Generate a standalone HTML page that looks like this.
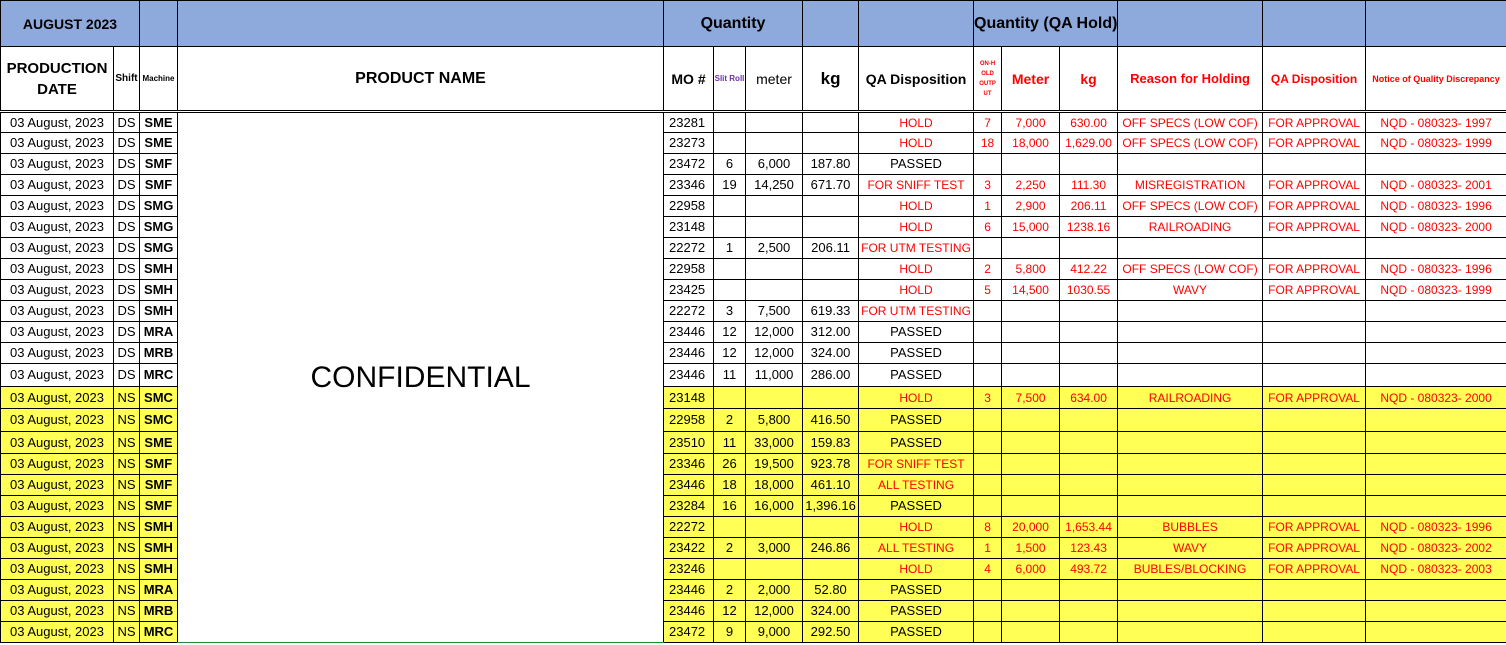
<!DOCTYPE html>
<html><head><meta charset="utf-8"><style>
html,body{margin:0;padding:0;background:#fff;}
body{width:1506px;height:645px;overflow:hidden;}
table{border-collapse:collapse;table-layout:fixed;width:1506px;font-family:"Liberation Sans",sans-serif;font-size:13px;color:#000;}
td{border:1px solid #000;padding:0;text-align:center;white-space:nowrap;overflow:hidden;line-height:14px;}
tr.h1 td{background:#8EA9DB;font-weight:bold;font-size:15px;height:45px;}
tr.h2 td{font-weight:bold;font-size:15px;height:63px;border-bottom:3px double #000;}
tr.y td{background:#FFFF55;}
tr.y td.pn{background:#fff;}
.r{color:#f00;font-size:12px;}
.b{font-weight:bold;}
.mo{text-align:left;padding-left:5px;}
.pn{font-size:30px;vertical-align:middle;border-bottom:1px solid #1a8a3a;}
</style></head><body>
<table>
<colgroup>
<col style="width:113px"><col style="width:26px"><col style="width:38px"><col style="width:486px"><col style="width:50px"><col style="width:32px"><col style="width:57px"><col style="width:56px"><col style="width:115px"><col style="width:28px"><col style="width:58px"><col style="width:58px"><col style="width:145px"><col style="width:103px"><col style="width:141px">
</colgroup>
<tr class="h1"><td colspan="2" style="font-size:14px">AUGUST 2023</td><td></td><td></td><td colspan="3" style="font-size:16px">Quantity</td><td></td><td></td><td colspan="3" style="font-size:16px;overflow:visible">Quantity (QA Hold)</td><td></td><td></td><td style="border-right:1px solid #1a8a3a"></td></tr>
<tr class="h2"><td style="font-size:15px;line-height:21px">PRODUCTION<br>DATE</td><td style="font-size:10px">Shift</td><td style="font-size:8px">Machine</td><td style="font-size:16px">PRODUCT NAME</td><td style="font-size:14px">MO #</td><td style="font-size:8px;color:#7030a0">Slit Roll</td><td style="font-weight:normal;font-size:14px">meter</td><td style="font-size:17px">kg</td><td style="font-size:14px">QA Disposition</td><td class="r" style="font-size:6px;line-height:10px">ON-H<br>OLD<br>OUTP<br>UT</td><td class="r" style="font-size:14px">Meter</td><td class="r" style="font-size:14px">kg</td><td class="r" style="font-size:13px">Reason for Holding</td><td class="r" style="font-size:12px">QA Disposition</td><td class="r" style="font-size:9px">Notice of Quality Discrepancy</td></tr>

<tr style="height:21px"><td>03 August, 2023</td><td>DS</td><td class="b">SME</td><td class="pn" rowspan="25">CONFIDENTIAL</td><td class="mo">23281</td><td></td><td></td><td></td><td class="r">HOLD</td><td class="r">7</td><td class="r">7,000</td><td class="r">630.00</td><td class="r">OFF SPECS (LOW COF)</td><td class="r">FOR APPROVAL</td><td class="r">NQD - 080323- 1997</td></tr>
<tr style="height:21px"><td>03 August, 2023</td><td>DS</td><td class="b">SME</td><td class="mo">23273</td><td></td><td></td><td></td><td class="r">HOLD</td><td class="r">18</td><td class="r">18,000</td><td class="r">1,629.00</td><td class="r">OFF SPECS (LOW COF)</td><td class="r">FOR APPROVAL</td><td class="r">NQD - 080323- 1999</td></tr>
<tr style="height:21px"><td>03 August, 2023</td><td>DS</td><td class="b">SMF</td><td class="mo">23472</td><td>6</td><td>6,000</td><td>187.80</td><td>PASSED</td><td></td><td></td><td></td><td></td><td></td><td></td></tr>
<tr style="height:21px"><td>03 August, 2023</td><td>DS</td><td class="b">SMF</td><td class="mo">23346</td><td>19</td><td>14,250</td><td>671.70</td><td class="r">FOR SNIFF TEST</td><td class="r">3</td><td class="r">2,250</td><td class="r">111.30</td><td class="r">MISREGISTRATION</td><td class="r">FOR APPROVAL</td><td class="r">NQD - 080323- 2001</td></tr>
<tr style="height:21px"><td>03 August, 2023</td><td>DS</td><td class="b">SMG</td><td class="mo">22958</td><td></td><td></td><td></td><td class="r">HOLD</td><td class="r">1</td><td class="r">2,900</td><td class="r">206.11</td><td class="r">OFF SPECS (LOW COF)</td><td class="r">FOR APPROVAL</td><td class="r">NQD - 080323- 1996</td></tr>
<tr style="height:21px"><td>03 August, 2023</td><td>DS</td><td class="b">SMG</td><td class="mo">23148</td><td></td><td></td><td></td><td class="r">HOLD</td><td class="r">6</td><td class="r">15,000</td><td class="r">1238.16</td><td class="r">RAILROADING</td><td class="r">FOR APPROVAL</td><td class="r">NQD - 080323- 2000</td></tr>
<tr style="height:21px"><td>03 August, 2023</td><td>DS</td><td class="b">SMG</td><td class="mo">22272</td><td>1</td><td>2,500</td><td>206.11</td><td class="r">FOR UTM TESTING</td><td></td><td></td><td></td><td></td><td></td><td></td></tr>
<tr style="height:21px"><td>03 August, 2023</td><td>DS</td><td class="b">SMH</td><td class="mo">22958</td><td></td><td></td><td></td><td class="r">HOLD</td><td class="r">2</td><td class="r">5,800</td><td class="r">412.22</td><td class="r">OFF SPECS (LOW COF)</td><td class="r">FOR APPROVAL</td><td class="r">NQD - 080323- 1996</td></tr>
<tr style="height:21px"><td>03 August, 2023</td><td>DS</td><td class="b">SMH</td><td class="mo">23425</td><td></td><td></td><td></td><td class="r">HOLD</td><td class="r">5</td><td class="r">14,500</td><td class="r">1030.55</td><td class="r">WAVY</td><td class="r">FOR APPROVAL</td><td class="r">NQD - 080323- 1999</td></tr>
<tr style="height:21px"><td>03 August, 2023</td><td>DS</td><td class="b">SMH</td><td class="mo">22272</td><td>3</td><td>7,500</td><td>619.33</td><td class="r">FOR UTM TESTING</td><td></td><td></td><td></td><td></td><td></td><td></td></tr>
<tr style="height:21px"><td>03 August, 2023</td><td>DS</td><td class="b">MRA</td><td class="mo">23446</td><td>12</td><td>12,000</td><td>312.00</td><td>PASSED</td><td></td><td></td><td></td><td></td><td></td><td></td></tr>
<tr style="height:21px"><td>03 August, 2023</td><td>DS</td><td class="b">MRB</td><td class="mo">23446</td><td>12</td><td>12,000</td><td>324.00</td><td>PASSED</td><td></td><td></td><td></td><td></td><td></td><td></td></tr>
<tr style="height:23px"><td>03 August, 2023</td><td>DS</td><td class="b">MRC</td><td class="mo">23446</td><td>11</td><td>11,000</td><td>286.00</td><td>PASSED</td><td></td><td></td><td></td><td></td><td></td><td></td></tr>

<tr class="y" style="height:22px"><td>03 August, 2023</td><td>NS</td><td class="b">SMC</td><td class="mo">23148</td><td></td><td></td><td></td><td class="r">HOLD</td><td class="r">3</td><td class="r">7,500</td><td class="r">634.00</td><td class="r">RAILROADING</td><td class="r">FOR APPROVAL</td><td class="r">NQD - 080323- 2000</td></tr>
<tr class="y" style="height:23px"><td>03 August, 2023</td><td>NS</td><td class="b">SMC</td><td class="mo">22958</td><td>2</td><td>5,800</td><td>416.50</td><td>PASSED</td><td></td><td></td><td></td><td></td><td></td><td></td></tr>
<tr class="y" style="height:22px"><td>03 August, 2023</td><td>NS</td><td class="b">SME</td><td class="mo">23510</td><td>11</td><td>33,000</td><td>159.83</td><td>PASSED</td><td></td><td></td><td></td><td></td><td></td><td></td></tr>
<tr class="y" style="height:21px"><td>03 August, 2023</td><td>NS</td><td class="b">SMF</td><td class="mo">23346</td><td>26</td><td>19,500</td><td>923.78</td><td class="r">FOR SNIFF TEST</td><td></td><td></td><td></td><td></td><td></td><td></td></tr>
<tr class="y" style="height:21px"><td>03 August, 2023</td><td>NS</td><td class="b">SMF</td><td class="mo">23446</td><td>18</td><td>18,000</td><td>461.10</td><td class="r">ALL TESTING</td><td></td><td></td><td></td><td></td><td></td><td></td></tr>
<tr class="y" style="height:21px"><td>03 August, 2023</td><td>NS</td><td class="b">SMF</td><td class="mo">23284</td><td>16</td><td>16,000</td><td>1,396.16</td><td>PASSED</td><td></td><td></td><td></td><td></td><td></td><td></td></tr>
<tr class="y" style="height:21px"><td>03 August, 2023</td><td>NS</td><td class="b">SMH</td><td class="mo">22272</td><td></td><td></td><td></td><td class="r">HOLD</td><td class="r">8</td><td class="r">20,000</td><td class="r">1,653.44</td><td class="r">BUBBLES</td><td class="r">FOR APPROVAL</td><td class="r">NQD - 080323- 1996</td></tr>
<tr class="y" style="height:21px"><td>03 August, 2023</td><td>NS</td><td class="b">SMH</td><td class="mo">23422</td><td>2</td><td>3,000</td><td>246.86</td><td class="r">ALL TESTING</td><td class="r">1</td><td class="r">1,500</td><td class="r">123.43</td><td class="r">WAVY</td><td class="r">FOR APPROVAL</td><td class="r">NQD - 080323- 2002</td></tr>
<tr class="y" style="height:21px"><td>03 August, 2023</td><td>NS</td><td class="b">SMH</td><td class="mo">23246</td><td></td><td></td><td></td><td class="r">HOLD</td><td class="r">4</td><td class="r">6,000</td><td class="r">493.72</td><td class="r">BUBLES/BLOCKING</td><td class="r">FOR APPROVAL</td><td class="r">NQD - 080323- 2003</td></tr>
<tr class="y" style="height:21px"><td>03 August, 2023</td><td>NS</td><td class="b">MRA</td><td class="mo">23446</td><td>2</td><td>2,000</td><td>52.80</td><td>PASSED</td><td></td><td></td><td></td><td></td><td></td><td></td></tr>
<tr class="y" style="height:21px"><td>03 August, 2023</td><td>NS</td><td class="b">MRB</td><td class="mo">23446</td><td>12</td><td>12,000</td><td>324.00</td><td>PASSED</td><td></td><td></td><td></td><td></td><td></td><td></td></tr>
<tr class="y" style="height:21px"><td>03 August, 2023</td><td>NS</td><td class="b">MRC</td><td class="mo">23472</td><td>9</td><td>9,000</td><td>292.50</td><td>PASSED</td><td></td><td></td><td></td><td></td><td></td><td></td></tr>
</table>
</body></html>
